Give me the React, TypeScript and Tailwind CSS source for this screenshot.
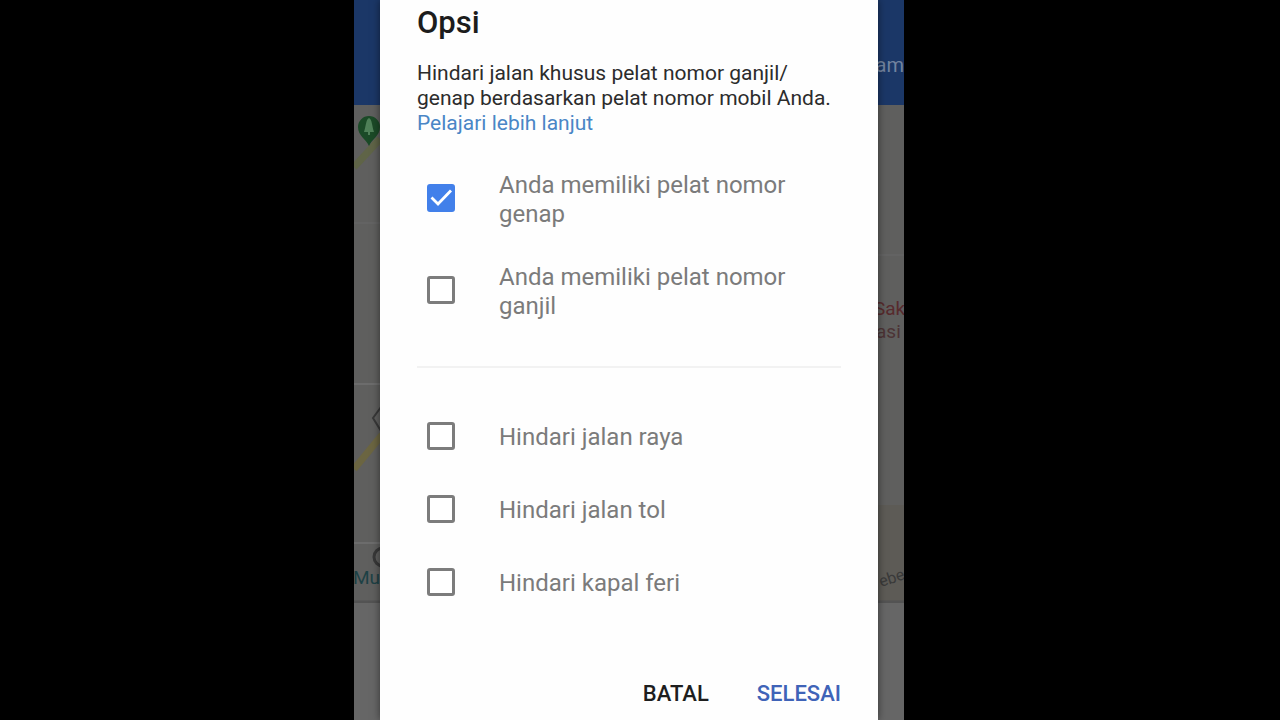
import { useState } from "react";

type Option = { id: string; label: string; checked?: boolean };

const plateOptions: Option[] = [
  { id: "genap", label: "Anda memiliki pelat nomor genap", checked: true },
  { id: "ganjil", label: "Anda memiliki pelat nomor ganjil" },
];

const routeOptions: Option[] = [
  { id: "raya", label: "Hindari jalan raya" },
  { id: "tol", label: "Hindari jalan tol" },
  { id: "feri", label: "Hindari kapal feri" },
];

function CheckRow({ option, tall = false }: { option: Option; tall?: boolean }) {
  const [checked, setChecked] = useState(Boolean(option.checked));
  return (
    <label
      htmlFor={option.id}
      className={`flex cursor-pointer items-center gap-11 pl-[10px] pr-6 ${tall ? "min-h-[92px]" : "min-h-[73px]"}`}
    >
      <span className="grid shrink-0 place-items-center">
        <input
          id={option.id}
          type="checkbox"
          checked={checked}
          onChange={(e) => setChecked(e.target.checked)}
          className="col-start-1 row-start-1 size-7 appearance-none rounded-[3px] border-[3px] border-[#7c7c7c] bg-white checked:border-[#4280ea] checked:bg-[#4280ea]"
        />
        {checked && (
          <svg viewBox="0 0 28 28" className="pointer-events-none col-start-1 row-start-1 size-7" aria-hidden="true">
            <path d="M4.5 13.5 L11 20 L24 6.5" fill="none" stroke="#fff" strokeWidth="2.8" />
          </svg>
        )}
      </span>
      <span className="pt-1 text-2xl leading-[29px] text-[#7b7b7b]">{option.label}</span>
    </label>
  );
}

function MapBackdrop() {
  return (
    <div className="absolute inset-0 flex flex-col bg-[#666666]" aria-hidden="true">
      <div className="flex h-[105px] items-center justify-end bg-[#1b3767] pt-6">
        <span className="text-xl text-[#72839f]">am</span>
      </div>
      <svg viewBox="0 0 550 498" className="w-full bg-[#5f5f5e]">
        <path d="M0 62 L26 34" stroke="#5f6447" strokeWidth="7" />
        <path d="M0 364 L28 330" stroke="#6b6541" strokeWidth="7" />
        <path d="M0 279 H26 M0 438 H26" stroke="#6c6c6c" strokeWidth="2" />
        <path d="M0 118 H26 M524 150 H550" stroke="#636363" strokeWidth="2" />
        <rect x="524" y="400" width="26" height="98" fill="#5d5b56" />
        <path d="M15 41 C12 34 4 31 4 22 A11 11 0 0 1 26 22 C26 31 18 34 15 41 Z" fill="#1b4a27" />
        <path d="M15 13 C18 14 18 21 20 27 H16 V30 H14 V27 H10 C12 21 12 14 15 13 Z" fill="#4f8058" />
        <path d="M27 302 L19 313 L27 326" fill="none" stroke="#383838" strokeWidth="2" />
        <circle cx="29" cy="452" r="9" fill="none" stroke="#383838" strokeWidth="3" />
        <text x="-1" y="479" fontSize="19" fill="#1d4145">Mu</text>
        <text x="520" y="210" fontSize="19" fill="#572a2d">Sak</text>
        <text x="522" y="233" fontSize="19" fill="#4c3335">asi</text>
        <text x="527" y="482" fontSize="16" fill="#3a3a3a" transform="rotate(-18 527 482)">ebe</text>
        <path d="M0 497 H550" stroke="#535353" strokeWidth="3" />
      </svg>
    </div>
  );
}

export default function App() {
  return (
    <main className="flex min-h-screen justify-center bg-black pr-[22px] font-['Roboto',sans-serif]">
      <div className="relative flex w-full max-w-[550px] overflow-hidden px-[26px]">
        <MapBackdrop />
        <section
          role="dialog"
          aria-labelledby="title"
          className="relative flex w-full flex-col bg-[#fefefe] px-[37px] pb-2 pt-[5px] shadow-[0_0_8px_rgba(0,0,0,0.5)]"
        >
          <h1 id="title" className="text-[31px] font-medium leading-9 text-[#1c1c1c]">
            Opsi
          </h1>
          <p className="mt-5 text-[21px] leading-[25px] text-[#2c2c2c]">
            Hindari jalan khusus pelat nomor ganjil/
            <br />
            genap berdasarkan pelat nomor mobil Anda.
            <br />
            <a href="#pelajari" className="text-[#4a86c6]">
              Pelajari lebih lanjut
            </a>
          </p>
          <div className="mt-4">
            {plateOptions.map((o) => (
              <CheckRow key={o.id} option={o} tall />
            ))}
          </div>
          <hr className="mb-[31px] mt-[30px] border-t-2 border-[#f2f2f2]" />
          <div>
            {routeOptions.map((o) => (
              <CheckRow key={o.id} option={o} />
            ))}
          </div>
          <div className="mt-auto flex justify-end gap-12 text-[22px] font-medium leading-9">
            <button type="button" className="text-[#1e1e1e]">
              BATAL
            </button>
            <button type="button" className="text-[#3f63b8]">
              SELESAI
            </button>
          </div>
        </section>
      </div>
    </main>
  );
}
